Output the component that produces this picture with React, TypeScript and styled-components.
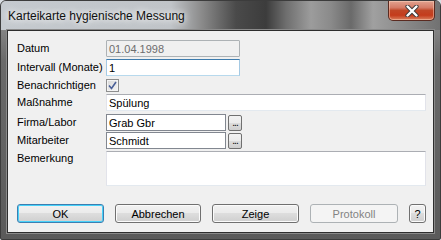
import React from "react";
import styled, { createGlobalStyle, css } from "styled-components";

const GlobalStyle = createGlobalStyle`
  html, body {
    margin: 0;
    padding: 0;
    background: #d8dde2;
  }
  body {
    font-family: "Liberation Sans", Arial, sans-serif;
    font-size: 11px;
    color: #000;
  }
`;

const WindowFrame = styled.div`
  width: 441px;
  height: 240px;
  box-sizing: border-box;
  border: 1px solid #3c3c3c;
  border-radius: 6px 6px 2px 2px;
  overflow: hidden;
  display: flex;
  flex-direction: column;
  background: linear-gradient(
    180deg,
    #9a9a9a 0px,
    #6a6a6a 60px,
    #5a5a5a 240px
  );
`;

const TitleBar = styled.div`
  height: 29px;
  flex-shrink: 0;
  display: flex;
  align-items: flex-start;
  background: linear-gradient(
    90deg,
    #c5cacf 0px,
    #c0c4c8 170px,
    #8c8c8c 200px,
    #4a4a4a 235px,
    #3c3c3c 265px,
    #6e6e6e 285px,
    #9c9c9c 310px,
    #8a8a8a 330px,
    #6a6a6a 350px,
    #a0a0a0 372px,
    #8c8c8c 400px,
    #707070 441px
  );
`;

const TitleText = styled.span`
  font-family: "Liberation Sans", Arial, sans-serif;
  font-size: 12px;
  color: #101010;
  margin: 8px 0 0 7px;
  line-height: 14px;
  text-shadow: 0 0 6px #ffffff, 0 0 10px rgba(255, 255, 255, 0.8);
`;

const CloseButton = styled.div`
  margin-left: auto;
  margin-right: 5px;
  width: 47px;
  height: 20px;
  box-sizing: border-box;
  border: 1px solid #5a2a20;
  border-top: none;
  border-radius: 0 0 5px 5px;
  background: linear-gradient(
    180deg,
    #e2a390 0%,
    #d47b66 35%,
    #c04626 50%,
    #c43c1c 75%,
    #d9805e 100%
  );
  box-shadow: inset 0 0 0 1px rgba(255, 220, 200, 0.45);
  display: flex;
  align-items: center;
  justify-content: center;
`;

const Client = styled.div`
  flex: 1;
  margin: 0 6px 6px 6px;
  border: 1px solid #2e2e2e;
  box-shadow: 0 0 0 1px #8a8a8a;
  background: #f0f0f0;
  display: flex;
  flex-direction: column;
  padding-left: 9px;
`;

const Row = styled.div<{ $top: number; $h: number; $alignTop?: boolean }>`
  display: flex;
  align-items: ${({ $alignTop }) => ($alignTop ? "flex-start" : "center")};
  margin-top: ${({ $top }) => $top}px;
  height: ${({ $h }) => $h}px;
`;

const Label = styled.div<{ $pad?: number }>`
  width: 89px;
  flex-shrink: 0;
  white-space: nowrap;
  padding-top: ${({ $pad }) => $pad ?? 0}px;
  line-height: 13px;
`;

const TextBox = styled.div<{
  $w: number;
  $h?: number;
  $variant?: "normal" | "disabled" | "focus" | "dark";
}>`
  width: ${({ $w }) => $w}px;
  height: ${({ $h }) => $h ?? 17}px;
  box-sizing: border-box;
  background: #ffffff;
  padding: 1px 0 0 2px;
  line-height: 14px;
  font-size: 11px;
  border: 1px solid;
  border-color: #abadb3 #e2e3ea #e3e9ef #e2e3ea;
  ${({ $variant }) =>
    $variant === "disabled" &&
    css`
      background: #f0f0f0;
      color: #6d6d6d;
      border-color: #adb2b5;
      border-radius: 1px;
    `}
  ${({ $variant }) =>
    $variant === "focus" &&
    css`
      border-color: #3d7bad #a4c9e3 #b7d9ed #a4c9e3;
    `}
  ${({ $variant }) =>
    $variant === "dark" &&
    css`
      border-color: #828790;
    `}
`;

const Browse = styled.div`
  width: 14px;
  height: 16px;
  margin-left: 2px;
  box-sizing: border-box;
  border: 1px solid #707070;
  border-radius: 2px;
  background: linear-gradient(180deg, #f2f2f2 0%, #ebebeb 50%, #dddddd 51%, #cfcfcf 100%);
  font-size: 10px;
  line-height: 10px;
  display: flex;
  align-items: flex-end;
  justify-content: center;
  padding-bottom: 2px;
  letter-spacing: -1px;
`;

const CheckBox = styled.div`
  width: 13px;
  height: 13px;
  box-sizing: border-box;
  border: 1px solid #8e8f8f;
  background: linear-gradient(135deg, #d8d8d8 0%, #f4f4f4 100%);
  box-shadow: inset 0 0 0 1px #f4f4f4;
  display: flex;
  align-items: center;
  justify-content: center;
`;

const ButtonRow = styled.div`
  display: flex;
  gap: 11px;
  margin-top: 18px;
`;

const Button = styled.div<{ $w: number; $default?: boolean; $disabled?: boolean }>`
  width: ${({ $w }) => $w}px;
  height: 19px;
  box-sizing: border-box;
  border: 1px solid #707070;
  border-radius: 3px;
  background: linear-gradient(180deg, #f2f2f2 0%, #ebebeb 45%, #dddddd 50%, #cfcfcf 100%);
  box-shadow: inset 0 0 0 1px #fbfbfb;
  display: flex;
  align-items: center;
  justify-content: center;
  font-size: 11px;
  ${({ $default }) =>
    $default &&
    css`
      border-color: #3c7fb1;
      box-shadow: inset 0 0 0 1px #48d2fa;
    `}
  ${({ $disabled }) =>
    $disabled &&
    css`
      border-color: #adb2b5;
      background: #f4f4f4;
      box-shadow: none;
      color: #838383;
    `}
`;

const App: React.FC = () => {
  return (
    <>
      <GlobalStyle />
      <WindowFrame>
        <TitleBar>
          <TitleText>Karteikarte hygienische Messung</TitleText>
          <CloseButton>
            <svg width="14" height="12" viewBox="0 0 14 12">
              <path
                d="M2.5 1.5 L11.5 10.5 M11.5 1.5 L2.5 10.5"
                stroke="#3a3a3a"
                strokeWidth="4.2"
                strokeLinecap="round"
                fill="none"
              />
              <path
                d="M2.5 1.5 L11.5 10.5 M11.5 1.5 L2.5 10.5"
                stroke="#ffffff"
                strokeWidth="2.4"
                strokeLinecap="round"
                fill="none"
              />
            </svg>
          </CloseButton>
        </TitleBar>
        <Client>
          <Row $top={9} $h={17}>
            <Label>Datum</Label>
            <TextBox $w={134} $variant="disabled">01.04.1998</TextBox>
          </Row>
          <Row $top={2} $h={17}>
            <Label>Intervall (Monate)</Label>
            <TextBox $w={134} $variant="focus">1</TextBox>
          </Row>
          <Row $top={2} $h={15}>
            <Label>Benachrichtigen</Label>
            <CheckBox>
              <svg width="9" height="9" viewBox="0 0 9 9">
                <path
                  d="M1 4.5 L3.5 7.5 L8 1"
                  stroke="#4a5f97"
                  strokeWidth="1.6"
                  fill="none"
                />
              </svg>
            </CheckBox>
          </Row>
          <Row $top={1} $h={17}>
            <Label>Maßnahme</Label>
            <TextBox $w={320}>Spülung</TextBox>
          </Row>
          <Row $top={3} $h={17}>
            <Label>Firma/Labor</Label>
            <TextBox $w={120} $variant="dark">Grab Gbr</TextBox>
            <Browse>...</Browse>
          </Row>
          <Row $top={1} $h={17}>
            <Label>Mitarbeiter</Label>
            <TextBox $w={120} $variant="dark">Schmidt</TextBox>
            <Browse>...</Browse>
          </Row>
          <Row $top={2} $h={35} $alignTop>
            <Label $pad={1}>Bemerkung</Label>
            <TextBox $w={320} $h={35} />
          </Row>
          <ButtonRow>
            <Button $w={87} $default>OK</Button>
            <Button $w={86}>Abbrechen</Button>
            <Button $w={87}>Zeige</Button>
            <Button $w={88} $disabled>Protokoll</Button>
            <Button $w={17}>?</Button>
          </ButtonRow>
        </Client>
      </WindowFrame>
    </>
  );
};

export default App;
